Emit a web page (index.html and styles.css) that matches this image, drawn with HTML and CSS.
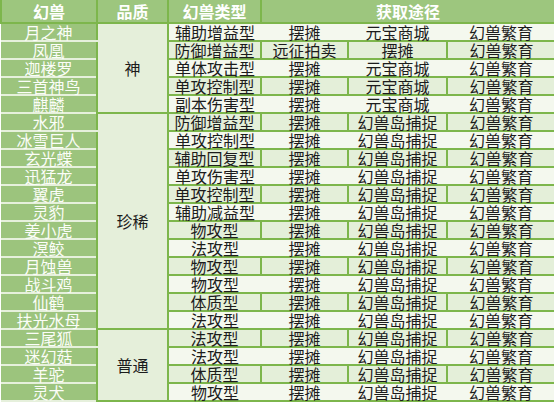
FILE: index.html
```html
<!DOCTYPE html>
<html lang="zh">
<head>
<meta charset="utf-8">
<link rel="stylesheet" href="styles.css">
</head>
<body>
<table class="pets">
  <colgroup>
    <col class="c-name"><col class="c-q"><col class="c-type"><col class="c-s1"><col class="c-s2"><col class="c-s3">
  </colgroup>
  <thead>
    <tr><th>幻兽</th><th>品质</th><th>幻兽类型</th><th colspan="3">获取途径</th></tr>
  </thead>
  <tbody>
    <tr class="lt"><td class="name">月之神</td><td class="q" rowspan="5">神</td><td>辅助增益型</td><td>摆摊</td><td>元宝商城</td><td>幻兽繁育</td></tr>
    <tr class="dk"><td class="name">凤凰</td><td>防御增益型</td><td>远征拍卖</td><td>摆摊</td><td>幻兽繁育</td></tr>
    <tr class="lt"><td class="name">迦楼罗</td><td>单体攻击型</td><td>摆摊</td><td>元宝商城</td><td>幻兽繁育</td></tr>
    <tr class="dk"><td class="name">三首神鸟</td><td>单攻控制型</td><td>摆摊</td><td>元宝商城</td><td>幻兽繁育</td></tr>
    <tr class="lt"><td class="name">麒麟</td><td>副本伤害型</td><td>摆摊</td><td>元宝商城</td><td>幻兽繁育</td></tr>
    <tr class="dk"><td class="name">水邪</td><td class="q" rowspan="12">珍稀</td><td>防御增益型</td><td>摆摊</td><td>幻兽岛捕捉</td><td>幻兽繁育</td></tr>
    <tr class="lt"><td class="name">冰雪巨人</td><td>单攻控制型</td><td>摆摊</td><td>幻兽岛捕捉</td><td>幻兽繁育</td></tr>
    <tr class="dk"><td class="name">玄光蝶</td><td>辅助回复型</td><td>摆摊</td><td>幻兽岛捕捉</td><td>幻兽繁育</td></tr>
    <tr class="lt"><td class="name">迅猛龙</td><td>单攻伤害型</td><td>摆摊</td><td>幻兽岛捕捉</td><td>幻兽繁育</td></tr>
    <tr class="dk"><td class="name">翼虎</td><td>单攻控制型</td><td>摆摊</td><td>幻兽岛捕捉</td><td>幻兽繁育</td></tr>
    <tr class="lt"><td class="name">灵豹</td><td>辅助减益型</td><td>摆摊</td><td>幻兽岛捕捉</td><td>幻兽繁育</td></tr>
    <tr class="dk"><td class="name">姜小虎</td><td>物攻型</td><td>摆摊</td><td>幻兽岛捕捉</td><td>幻兽繁育</td></tr>
    <tr class="lt"><td class="name">溟鲛</td><td>法攻型</td><td>摆摊</td><td>幻兽岛捕捉</td><td>幻兽繁育</td></tr>
    <tr class="dk"><td class="name">月蚀兽</td><td>物攻型</td><td>摆摊</td><td>幻兽岛捕捉</td><td>幻兽繁育</td></tr>
    <tr class="lt"><td class="name">战斗鸡</td><td>物攻型</td><td>摆摊</td><td>幻兽岛捕捉</td><td>幻兽繁育</td></tr>
    <tr class="dk"><td class="name">仙鹤</td><td>体质型</td><td>摆摊</td><td>幻兽岛捕捉</td><td>幻兽繁育</td></tr>
    <tr class="lt"><td class="name">扶光水母</td><td>法攻型</td><td>摆摊</td><td>幻兽岛捕捉</td><td>幻兽繁育</td></tr>
    <tr class="dk"><td class="name">三尾狐</td><td class="q" rowspan="4">普通</td><td>法攻型</td><td>摆摊</td><td>幻兽岛捕捉</td><td>幻兽繁育</td></tr>
    <tr class="lt"><td class="name">迷幻菇</td><td>法攻型</td><td>摆摊</td><td>幻兽岛捕捉</td><td>幻兽繁育</td></tr>
    <tr class="dk"><td class="name">羊驼</td><td>体质型</td><td>摆摊</td><td>幻兽岛捕捉</td><td>幻兽繁育</td></tr>
    <tr class="lt"><td class="name">灵犬</td><td>物攻型</td><td>摆摊</td><td>幻兽岛捕捉</td><td>幻兽繁育</td></tr>
  </tbody>
</table>
</body>
</html>
```
FILE: styles.css
```css
html, body {
  margin: 0;
  padding: 0;
  background: #ffffff;
}
.pets {
  border-collapse: collapse;
  table-layout: fixed;
  width: 554px;
  font-family: "Noto Sans CJK SC", "Noto Sans", sans-serif;
  font-size: 16px;
  line-height: 16px;
  color: #1c1c1c;
}
.c-name { width: 96px; }
.c-q { width: 71px; }
.c-type { width: 93px; }
.c-s1 { width: 87px; }
.c-s2 { width: 99px; }
.c-s3 { width: 108px; }
.pets th {
  height: 22px;
  padding: 0;
  background: #9dc67e;
  color: #ffffff;
  font-weight: bold;
  text-align: center;
  border: 2px solid #7db64c;
  border-top: none;
}
.pets td {
  height: 16px;
  padding: 0;
  text-align: center;
  white-space: nowrap;
  border-top: 2px solid #7db64c;
  border-bottom: 2px solid #7db64c;
  border-left: 2px solid #7db64c;
  border-right: 2px solid #7db64c;
}
.pets tr.lt td {
  background: #f4f8ee;
  border-left: none;
  border-right: none;
}
.pets tr.dk td {
  background: #e4efd9;
}
.pets td.name,
.pets tr.lt td.name,
.pets tr.dk td.name {
  background: #9cc47d;
  color: #fbfdf8;
  border-left: none;
  border-right: 2px solid #7db64c;
  border-top: 2px solid #e6f0dc;
  border-bottom: 2px solid #e6f0dc;
}
.pets td.q,
.pets tr.lt td.q,
.pets tr.dk td.q {
  background: #e5efda;
  border-left: 2px solid #7db64c;
  border-right: 2px solid #7db64c;
}
.pets tr.dk td:last-child {
  border-right: none;
}
```
